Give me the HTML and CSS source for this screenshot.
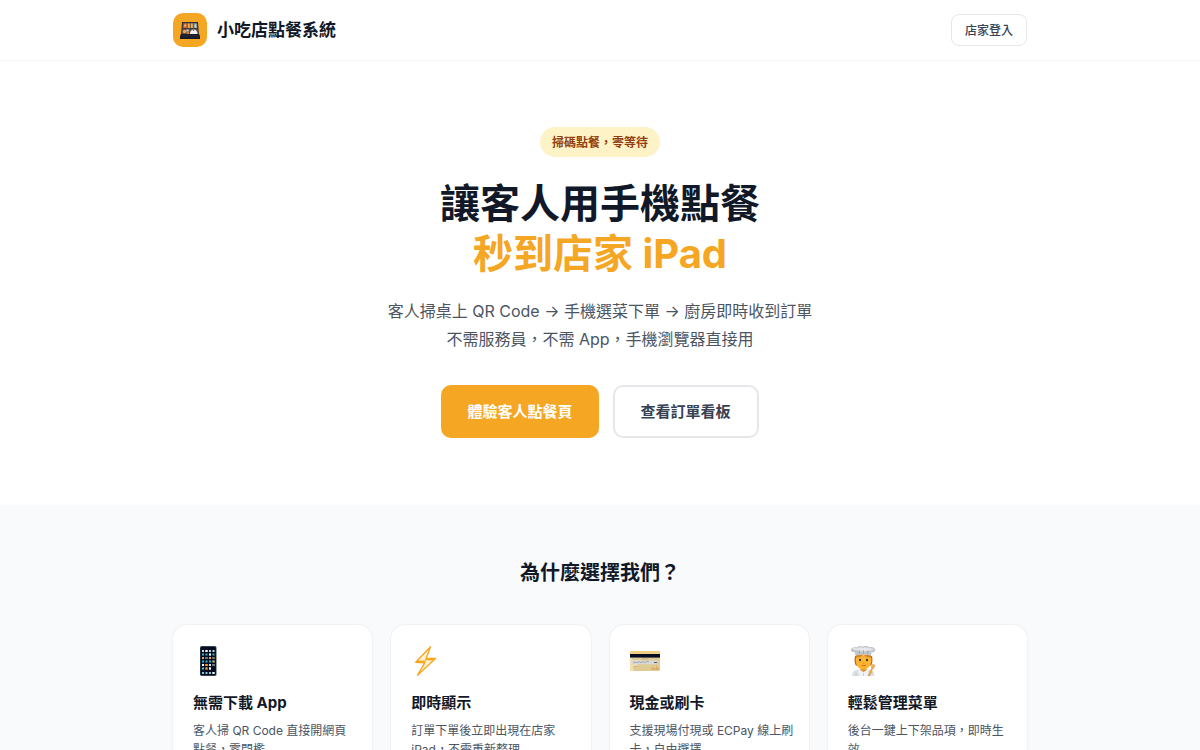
FILE: index.html
```html
<!DOCTYPE html>
<html lang="zh-Hant">

<head>
    <meta charset="UTF-8">
    <meta name="viewport" content="width=device-width, initial-scale=1">
    <title>小吃店點餐系統</title>
    <link rel="stylesheet" href="styles.css">
</head>

<body>
    <!-- Header -->
    <header class="site-header">
        <div class="container header-inner">
            <a class="brand" href="#">
                <span class="brand-logo">
                    <svg viewBox="0 -1 20 20" aria-hidden="true">
                        <path d="M2 1h16l1 13H1z" fill="#30343c"/>
                        <path d="M3 2h14l1 11H2z" fill="#5d5450"/>
                        <path d="M1 13h18l1 2v3H0v-3z" fill="#171a28"/>
                        <path d="M0 15h20" stroke="#3a3a48" stroke-width=".6"/>
                        <path d="M3.800 2.500h3V7H3.400z" fill="#d56c2b"/>
                        <circle cx="5.200" cy="4.500" r="1" fill="#f4c08a"/>
                        <path d="M7.800 2.500h2V7h-2zM10.800 2.500h2V7h-2z" fill="#ffab45"/>
                        <path d="M13.800 2.500h2.700l.4 4.500h-3.100z" fill="#91a9b5"/>
                        <path d="M15.200 3.500h1v3h-1z" fill="#f0dfc5"/>
                        <path d="M2.500 7.700h15" stroke="#282936" stroke-width=".7"/>
                        <circle cx="4.500" cy="10.500" r="1.700" fill="#f2a25c"/>
                        <circle cx="7.500" cy="9.500" r="1.300" fill="#e2c397"/>
                        <circle cx="7.800" cy="12" r="1.300" fill="#d67a32"/>
                        <path d="M10 13c0-3 1.500-4.500 3.700-4.500s3.800 1.500 3.800 4.500z" fill="#f4f1ec"/>
                        <circle cx="13.500" cy="9.300" r=".7" fill="#a6453a"/>
                    </svg>
                </span>
                <span>小吃店點餐系統</span>
            </a>
            <a class="login" href="#">店家登入</a>
        </div>
    </header>

    <main>
        <!-- Hero -->
        <section class="hero">
            <div class="badge">掃碼點餐，零等待</div>
            <h1>讓客人用手機點餐<br><span>秒到店家 iPad</span></h1>
            <p class="lead">客人掃桌上 QR Code → 手機選菜下單 → 廚房即時收到訂單<br>不需服務員，不需 App，手機瀏覽器直接用</p>
            <div class="actions">
                <a class="btn btn-primary" href="#">體驗客人點餐頁</a>
                <a class="btn btn-outline" href="#">查看訂單看板</a>
            </div>
        </section>

        <!-- Features -->
        <section class="features">
            <div class="container">
                <h2>為什麼選擇我們？</h2>
                <div class="cards">
                    <div class="card">
                        <svg class="card-icon" viewBox="0 0 30 30" aria-hidden="true">
                            <rect x="7" y="0" width="16.500" height="30" rx="1.800" fill="#30414b"/>
                            <rect x="7.700" y="1" width="15.100" height="28" rx="1.200" fill="#050b20"/>
                            <g stroke-width="2" stroke-dasharray="2 1.500" fill="none">
                                <path d="M9 5h13" stroke="#b4dfe2"/>
                                <path d="M9 8.500h13" stroke="#43aeba"/>
                                <path d="M9 12h13" stroke="#f0a24d"/>
                                <path d="M9 15.500h13" stroke="#36b7c7"/>
                                <path d="M9 19h13" stroke="#e1dfd8"/>
                                <path d="M9 22.500h9" stroke="#57c5cf"/>
                                <path d="M9 27h13" stroke="#8ac9cf"/>
                            </g>
                            <path d="M12.500 4h2v2h-2zM16 7.500h2v2h-2zM9 18h2v2H9zM16 21.500h2v2h-2zM19.500 26h2v2h-2z" fill="#fff"/>
                            <path d="M19.500 14.500h2v2h-2zM12.500 18h2v2h-2zM12.500 21.500h2v2h-2z" fill="#ff9324"/>
                            <path d="M12.500 11h2v2h-2zM19.500 11h2v2h-2zM19.500 18h2v2h-2z" fill="#667885"/>
                        </svg>
                        <h3>無需下載 App</h3>
                        <p>客人掃 QR Code 直接開網頁點餐，零門檻</p>
                    </div>
                    <div class="card">
                        <svg class="card-icon" viewBox="0 0 30 30" aria-hidden="true">
                            <path d="M19.500.8 4.700 16.300l9 .5L6.500 29.200 24.500 12.500l-9.300-.3z" fill="#fff2d9" stroke="#f8a51b" stroke-width="1.300" stroke-linejoin="round"/>
                            <path d="M15.200 12.200l9.300.3-2.500 2.100-8.300-.3zM13.700 16.800l-9-.5 2-1.800 8.300.3z" fill="#f8a51b"/>
                        </svg>
                        <h3>即時顯示</h3>
                        <p>訂單下單後立即出現在店家 iPad，不需重新整理</p>
                    </div>
                    <div class="card">
                        <svg class="card-icon" viewBox="0 0 30 30" aria-hidden="true">
                            <rect x="0" y="5" width="30" height="20" rx="1.200" fill="#dfca94"/>
                            <path d="M1 5h28l1 1v2.300H0V6z" fill="#f0cf83"/>
                            <path d="M0 11h13L3 25H1l-1-1z" fill="#f3dfae"/>
                            <path d="M0 8h30v3.600H0z" fill="#070c25"/>
                            <path d="M2 13h16" stroke="#bfae7e" stroke-width=".8"/>
                            <path d="M2 14.500h25v3.800H2z" fill="#d8d9d8"/>
                            <path d="M3 17l2-1 2 .8 2-1.300 2 1.200 2-1 2 .8 2-1 2 .5" stroke="#8b929e" stroke-width=".7" fill="none"/>
                            <path d="M24 16.500h3" stroke="#4b5265"/>
                            <path d="M3 20.500h5M3 22h3" stroke="#c2ac77" stroke-width=".7"/>
                            <path d="M22 24v-2h2v2m2 0v-2h2v2M26 20h1" stroke="#d79548" stroke-width=".8" fill="none"/>
                        </svg>
                        <h3>現金或刷卡</h3>
                        <p>支援現場付現或 ECPay 線上刷卡，自由選擇</p>
                    </div>
                    <div class="card">
                        <svg class="card-icon" viewBox="0 0 30 30" aria-hidden="true">
                            <path d="M4 30c.3-4 2-6 6-6.500h11c4 .5 5 2.500 5.500 6.500z" fill="#dcdfe4"/>
                            <path d="M10 23.500l5.500 3 5-3-1 6.500h-8z" fill="#f2f3f6"/>
                            <path d="M8 27v3m14-3v3M15.500 27v3" stroke="#b7bcc5" stroke-width=".7"/>
                            <path d="M12.500 20h6v4l-3 2-3-2z" fill="#e99428"/>
                            <path d="M7 10c-.8 4-.5 7 .8 9.500h15.400c1.300-2.500 1.600-5.500.8-9.500z" fill="#b8601f"/>
                            <path d="M8 9.500h15c.8 5 .3 9-2 11.500-3 3-8 3-11 0C7.700 18.500 7.400 14.500 8 9.500z" fill="#fdb431"/>
                            <path d="M8 12c2.500-.6 5-1.200 7.500-3 2.500 1.800 5 2.400 7.500 3V8.500H8z" fill="#d98425"/>
                            <ellipse cx="12" cy="14" rx="1" ry="1.300" fill="#2b283b"/>
                            <ellipse cx="19" cy="14" rx="1" ry="1.300" fill="#2b283b"/>
                            <path d="M14.800 17h1.600" stroke="#df8520" stroke-width=".7" fill="none"/>
                            <path d="M13 19c1.500.6 3.500.6 5 0-.8 1.600-4 1.600-5 0z" fill="#b83b23"/>
                            <path d="M7.500 9.800 6.500 6C3 6.300 2 4 3.500 2.500 5 1 7 1 8.500 1.500 11-.5 13.500-.2 15 .8c2-1.300 5-1.200 6.500.4 3-.7 5.500.7 5.800 2.500.2 1.800-2 2.800-3.800 2.600l-.5 3.500c-5-1.800-10.500-1.800-15.500 0z" fill="#c0c4cb"/>
                            <path d="M4 3c2-1.500 4-.7 5-.5 2-1.800 4-1.500 6-.5 2-1 4-1 6 .3 2-.3 4 .2 5 1.500-6 1.800-15 2-22-.8z" fill="#e6e8ec"/>
                            <path d="M11 4l.5 4m4-4v4m4.500-4-.5 4" stroke="#979daa" stroke-width=".7"/>
                            <path d="M20.500 30 24.500 22" stroke="#d99643" stroke-width="1.600" stroke-linecap="round"/>
                            <ellipse cx="25" cy="20.500" rx="1.900" ry="2.500" fill="#e9ae60" transform="rotate(25 25 20.500)"/>
                            <circle cx="22.800" cy="26" r="1.700" fill="#f7af36"/>
                        </svg>
                        <h3>輕鬆管理菜單</h3>
                        <p>後台一鍵上下架品項，即時生效</p>
                    </div>
                </div>
            </div>
        </section>
    </main>
</body>

</html>
```

FILE: styles.css
```css
* {
    box-sizing: border-box;
}

body {
    margin: 0;
    font-family: Inter, "Noto Sans CJK TC", sans-serif;
    line-height: 1.5;
    color: #111827;
    background-color: #ffffff;
}

h1,
h2,
h3,
p {
    margin: 0;
}

a {
    text-decoration: none;
}

.container {
    width: 100%;
    max-width: 894px;
    margin: 0 auto;
    padding: 0 20px;
}

/* Header */
.site-header {
    border-bottom: 1px solid #f3f4f6;
}

.header-inner {
    display: flex;
    align-items: center;
    justify-content: space-between;
    height: 60px;
}

.brand {
    display: flex;
    align-items: center;
    gap: 10px;
    font-size: 17px;
    font-weight: 700;
    line-height: 24px;
    color: #111827;
}

.brand-logo {
    display: flex;
    align-items: center;
    justify-content: center;
    width: 34px;
    height: 34px;
    border-radius: 10px;
    background-color: #f5a623;
}

.brand-logo svg {
    width: 20px;
    height: 20px;
}

.login {
    padding: 7px 13px 5px;
    border: 1px solid #e5e7eb;
    border-radius: 8px;
    font-size: 12px;
    font-weight: 500;
    line-height: 18px;
    color: #374151;
}

/* Hero */
.hero {
    display: flex;
    flex-direction: column;
    align-items: center;
    padding: 66px 20px 67px;
    text-align: center;
}

.badge {
    padding: 7px 12px 5px;
    border-radius: 15px;
    background-color: #fef3c7;
    font-size: 12px;
    font-weight: 700;
    line-height: 18px;
    color: #92400e;
}

h1 {
    margin-top: 22px;
    font-size: 40px;
    font-weight: 700;
    line-height: 50px;
}

h1 span {
    color: #f5a623;
}

.lead {
    margin-top: 18px;
    font-size: 16px;
    line-height: 28px;
    color: #4b5563;
}

.actions {
    display: flex;
    flex-wrap: wrap;
    justify-content: center;
    gap: 14px;
    margin-top: 32px;
}

.btn {
    display: flex;
    align-items: center;
    min-height: 53px;
    padding: 12px 26px;
    border-radius: 10px;
    font-size: 15px;
    font-weight: 700;
    line-height: 22px;
}

.btn-primary {
    background-color: #f5a623;
    color: #ffffff;
}

.btn-outline {
    border: 2px solid #e5e7eb;
    color: #374151;
}

/* Features */
.features {
    padding: 54px 0 66px;
    background-color: #f9fafb;
}

h2 {
    font-size: 20px;
    font-weight: 700;
    line-height: 28px;
    text-align: center;
}

.cards {
    display: grid;
    grid-template-columns: repeat(4, 1fr);
    gap: 19px;
    margin-top: 38px;
}

.card {
    padding: 21px 15px 20px 20px;
    border-radius: 14px;
    background-color: #ffffff;
    box-shadow: 0 0 2px rgba(17, 24, 39, 0.12);
}

.card-icon {
    display: block;
    width: 30px;
    height: 30px;
}

.card h3 {
    margin-top: 16px;
    font-size: 15px;
    font-weight: 700;
    line-height: 22px;
}

.card p {
    margin-top: 7px;
    font-size: 12px;
    line-height: 19px;
    color: #4b5563;
}

@media (max-width: 760px) {
    .cards {
        grid-template-columns: repeat(2, 1fr);
    }
}
```
